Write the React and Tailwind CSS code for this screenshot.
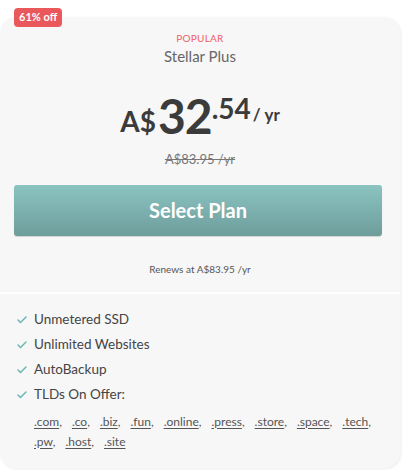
import { Check } from "lucide-react";

const tlds = [".com", ".co", ".biz", ".fun", ".online", ".press", ".store", ".space", ".tech", ".pw", ".host", ".site"];

const features = ["Unmetered SSD", "Unlimited Websites", "AutoBackup", "TLDs On Offer:"];

export default function App() {
    return (
        <div className="w-[407px] h-[473px] bg-white relative" style={{ fontFamily: "Lato, 'Open Sans', sans-serif" }}>
            <div className="absolute left-[14px] top-[8px] z-10 h-[19px] px-[5px] rounded-[4px] bg-[#e9585b] text-white text-[11px] font-bold flex items-center">
                61% off
            </div>
            <div className="absolute left-0 top-[17px] w-[400px] h-[451px] bg-[#f7f7f7] rounded-[16px] shadow-[1px_1px_3px_rgba(0,0,0,0.08)] flex flex-col">
                <div className="flex flex-col items-center pt-[14px]">
                    <span className="text-[10px] text-[#ef5e63] tracking-wide leading-[14px]">POPULAR</span>
                    <span className="text-[15px] text-[#666] leading-[20px] mt-[1px]">Stellar Plus</span>
                    <div className="flex items-end mt-[26px] text-[#3b3b3b] font-bold leading-none">
                        <span className="text-[28px] mb-[3px]">A$</span>
                        <span className="text-[48px] ml-[2px] -mb-[2px] tracking-[-1px]">32</span>
                        <span className="text-[28px] self-start mt-[2px]">.54</span>
                        <span className="text-[17px] self-start mt-[14px] ml-[2px]">/ yr</span>
                    </div>
                    <span className="text-[13px] text-[#777] line-through mt-[12px]">A$83.95 /yr</span>
                </div>
                <button className="mt-[15px] ml-[14px] mr-[18px] h-[51px] rounded-[3px] bg-gradient-to-b from-[#8bc4c2] to-[#6d9d9b] text-white text-[20px] font-bold shadow-[0_1px_1px_rgba(0,0,0,0.15)]">
                    Select Plan
                </button>
                <div className="text-center text-[10px] text-[#555] mt-[26px]">Renews at A$83.95 /yr</div>
                <div className="h-[2px] bg-white mt-[15px]" />
                <div className="flex flex-col pl-[16px] pr-[20px] pt-[17px] gap-[7px]">
                    {features.map((f) => (
                        <div key={f} className="flex items-center gap-[6px] h-[18px]">
                            <Check className="w-[12px] h-[12px] text-[#6cb6b3]" strokeWidth={3} />
                            <span className="text-[13.5px] text-[#444]">{f}</span>
                        </div>
                    ))}
                    <div className="flex flex-wrap pl-[18px] gap-x-[10px] leading-[20px] mt-[1px]">
                        {tlds.map((t, i) => (
                            <span key={t} className="text-[12px] text-[#555]">
                                <span className="underline underline-offset-2">{t}</span>
                                {i < tlds.length - 1 ? "," : ""}
                            </span>
                        ))}
                    </div>
                </div>
            </div>
        </div>
    );
}
